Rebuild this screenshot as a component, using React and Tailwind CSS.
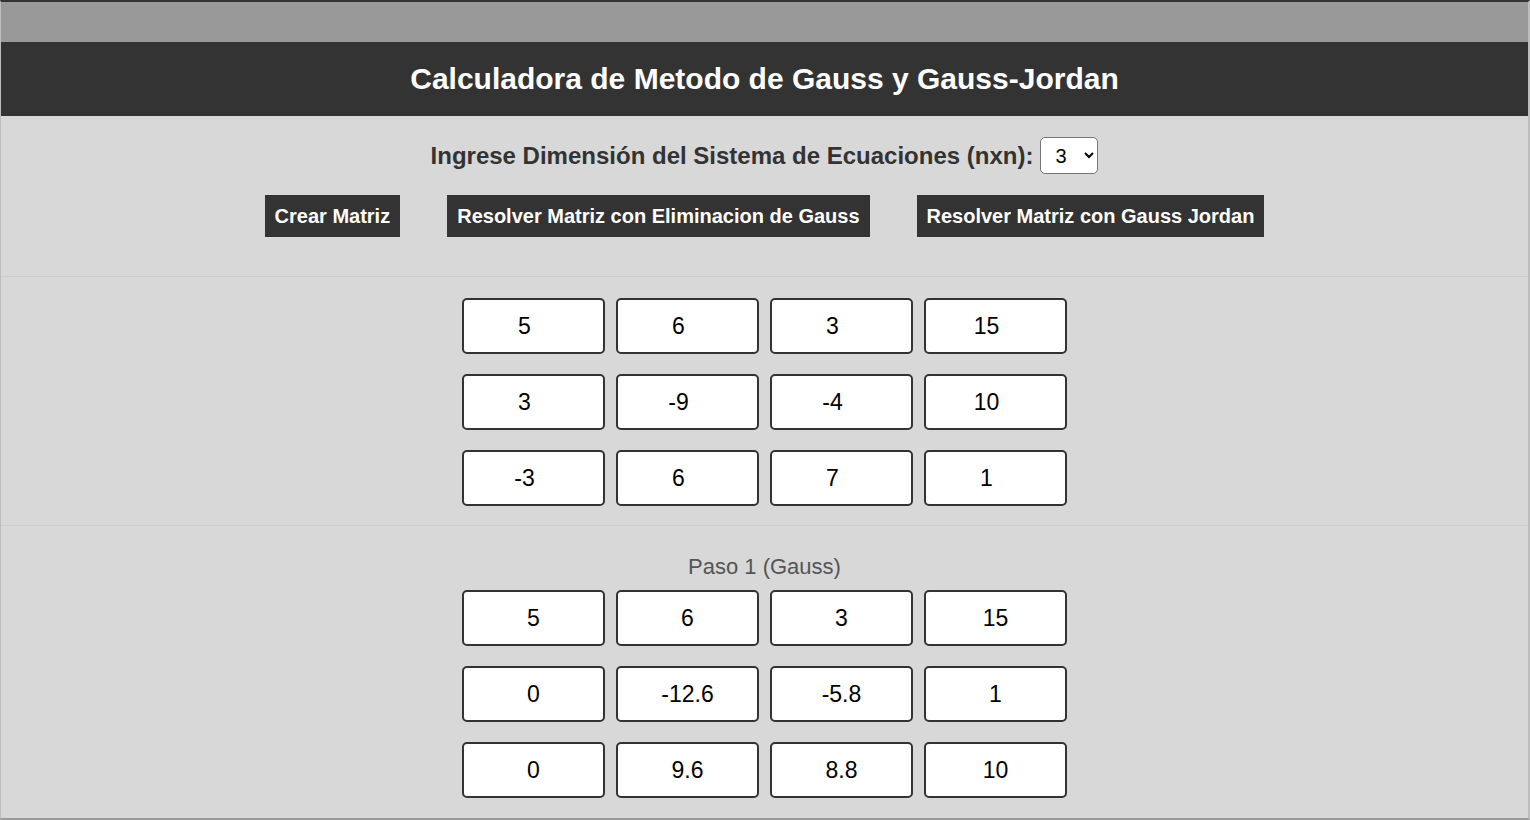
import React, { useState } from 'react';

const initial = [
  ['5', '6', '3', '15'],
  ['3', '-9', '-4', '10'],
  ['-3', '6', '7', '1'],
];

const paso1 = [
  ['5', '6', '3', '15'],
  ['0', '-12.6', '-5.8', '1'],
  ['0', '9.6', '8.8', '10'],
];

const font = { fontFamily: '"Liberation Sans", Arial, sans-serif' };

function Cell({ value, editable, onChange }) {
  if (editable) {
    return (
      <input
        value={value}
        onChange={onChange}
        className="w-[143px] h-[56px] bg-white border-2 border-[#333] rounded-[5px] text-center pr-[18px] text-[23px] text-black outline-none"
        style={font}
      />
    );
  }
  return (
    <div className="w-[143px] h-[56px] bg-white border-2 border-[#333] rounded-[5px] flex items-center justify-center text-[23px] text-black">
      {value}
    </div>
  );
}

export default function App() {
  const [n, setN] = useState('3');
  const [matrix, setMatrix] = useState(initial);

  const update = (r, c, v) => {
    setMatrix((m) => m.map((row, i) => (i === r ? row.map((x, j) => (j === c ? v : x)) : row)));
  };

  return (
    <div
      className="h-screen flex flex-col bg-[#d8d8d8] border-t-2 border-t-[#333] border-l border-l-[#bdbdbd] border-r-2 border-r-[#bdbdbd] border-b-2 border-b-[#9a9a9a] overflow-hidden"
      style={font}
    >
      <div className="h-[40px] bg-[#999] shrink-0" />
      <header className="h-[74px] bg-[#333] flex items-center justify-center shrink-0">
        <h1 className="text-white font-bold text-[30px] leading-none">
          Calculadora de Metodo de Gauss y Gauss-Jordan
        </h1>
      </header>

      <section className="pt-[21px] pb-[39px] flex flex-col items-center shrink-0">
        <div className="flex items-center gap-[7px]">
          <label className="text-[24px] font-bold text-[#333] leading-[28px]">
            Ingrese Dimensión del Sistema de Ecuaciones (nxn):
          </label>
          <select
            value={n}
            onChange={(e) => setN(e.target.value)}
            className="w-[58px] h-[37px] bg-white border border-[#767676] rounded-[5px] pl-[10px] text-[20px] text-black"
            style={font}
          >
            <option value="2">2</option>
            <option value="3">3</option>
            <option value="4">4</option>
            <option value="5">5</option>
          </select>
        </div>
        <div className="flex items-center gap-[47px] mt-[21px]">
          <button className="h-[42px] px-[10px] bg-[#333] text-white font-bold text-[20px]">Crear Matriz</button>
          <button className="h-[42px] px-[10px] bg-[#333] text-white font-bold text-[20px]">
            Resolver Matriz con Eliminacion de Gauss
          </button>
          <button className="h-[42px] px-[10px] bg-[#333] text-white font-bold text-[20px]">
            Resolver Matriz con Gauss Jordan
          </button>
        </div>
      </section>

      <section className="border-t border-t-[#cdcdcd] pt-[21px] pb-[19px] flex flex-col items-center gap-[20px] shrink-0">
        {matrix.map((row, r) => (
          <div key={r} className="flex gap-[11px]">
            {row.map((v, c) => (
              <Cell key={c} value={v} editable onChange={(e) => update(r, c, e.target.value)} />
            ))}
          </div>
        ))}
      </section>

      <section className="flex-1 border-t border-t-[#cdcdcd] pt-[28px] flex flex-col items-center">
        <p className="text-[22px] text-[#555] leading-[25px] mb-[11px]">Paso 1 (Gauss)</p>
        <div className="flex flex-col gap-[20px]">
          {paso1.map((row, r) => (
            <div key={r} className="flex gap-[11px]">
              {row.map((v, c) => (
                <Cell key={c} value={v} />
              ))}
            </div>
          ))}
        </div>
      </section>
    </div>
  );
}
